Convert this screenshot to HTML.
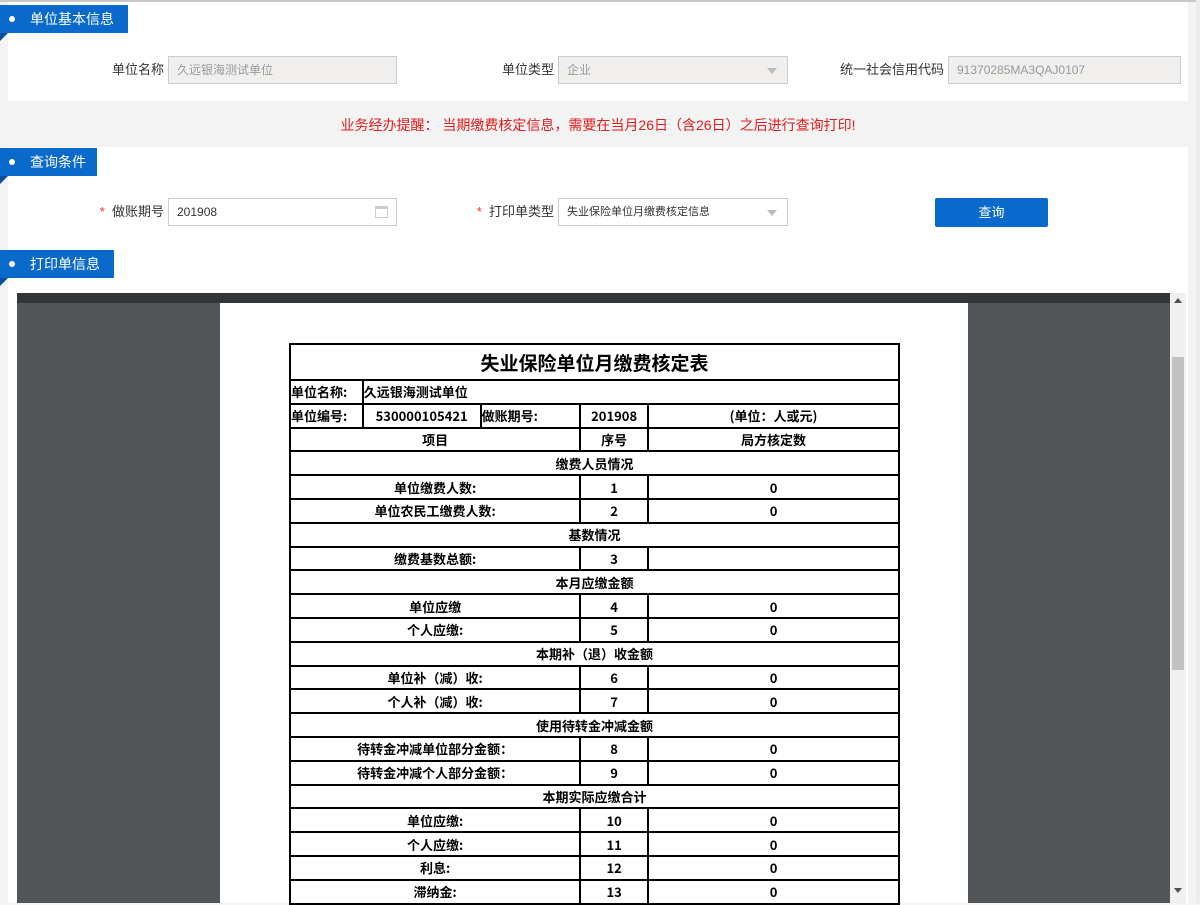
<!DOCTYPE html>
<html><head><meta charset="utf-8"><style>
*{margin:0;padding:0;box-sizing:border-box}
body{width:1200px;height:903px;overflow:hidden;background:#f3f3f3;font-family:"Liberation Sans","Microsoft YaHei","Noto Sans CJK SC",sans-serif;font-size:13px;color:#333;position:relative}
.abs{position:absolute}
.panel{position:absolute;background:#fff}
.tab{position:absolute;left:0;height:28px;background:#0a6acb;color:#fff;font-size:14px;line-height:28px;padding-left:30px}
.tab:before{content:"";position:absolute;left:9px;top:11px;width:6px;height:6px;border-radius:50%;background:#fff}
.tab:after{content:"";position:absolute;left:0;top:28px;border-top:8px solid #0a4f99;border-right:8px solid transparent}
.lbl{position:absolute;font-size:13px;color:#333;text-align:right;line-height:28px}
.inp{position:absolute;height:28px;border:1px solid #ccc;background:#f0efee;color:#999;font-size:12px;line-height:26px;padding-left:8px}
.inp.w{background:#fff;color:#333}
.arr{position:absolute;right:10px;top:11px;border-top:6px solid #bbb;border-left:5px solid transparent;border-right:5px solid transparent}
.req{color:#e33}
table{position:absolute;left:289px;top:343px;width:611px;border-collapse:collapse;font-family:"Noto Sans CJK SC",sans-serif;font-weight:bold;font-size:13px;color:#000}
td{border:2px solid #000;height:23.8px;text-align:center;padding:0;line-height:19px}
</style></head><body>
<div class="abs" style="left:0;top:0;width:1200px;height:2px;background:#c8c8c8"></div>
<div class="panel" style="left:8px;top:2px;width:1180px;height:99px"></div>
<div class="panel" style="left:8px;top:147px;width:1180px;height:756px"></div>
<div class="abs" style="left:1196px;top:0;width:4px;height:903px;background:#ececec"></div>

<div class="tab" style="top:5px;width:128px">单位基本信息</div>
<div class="lbl" style="left:100px;top:56px;width:64px">单位名称</div>
<div class="inp" style="left:168px;top:56px;width:229px">久远银海测试单位</div>
<div class="lbl" style="left:480px;top:56px;width:74px">单位类型</div>
<div class="inp" style="left:558px;top:56px;width:230px">企业<span class="arr"></span></div>
<div class="lbl" style="left:800px;top:56px;width:144px">统一社会信用代码</div>
<div class="inp" style="left:948px;top:56px;width:233px">91370285MA3QAJ0107</div>

<div class="abs" style="left:0;top:115px;width:1196px;text-align:center;color:#e31b1b;font-size:14px;line-height:20px">业务经办提醒： 当期缴费核定信息，需要在当月26日（含26日）之后进行查询打印!</div>

<div class="tab" style="top:148px;width:97px">查询条件</div>
<div class="lbl" style="left:90px;top:198px;width:74px"><span class="req">*</span>&nbsp; 做账期号</div>
<div class="inp w" style="left:168px;top:198px;width:229px">201908<span style="position:absolute;right:8px;top:7px;width:13px;height:12px;border:1px solid #ccc;border-top:3px solid #ccc"></span></div>
<div class="lbl" style="left:460px;top:198px;width:94px"><span class="req">*</span>&nbsp; 打印单类型</div>
<div class="inp w" style="left:558px;top:198px;width:230px;font-size:11px">失业保险单位月缴费核定信息<span class="arr"></span></div>
<div class="abs" style="left:935px;top:198px;width:113px;height:29px;background:#0a6acb;color:#fff;text-align:center;line-height:29px;border-radius:2px">查询</div>

<div class="tab" style="top:250px;width:114px">打印单信息</div>

<div class="abs" style="left:17px;top:293px;width:1153px;height:610px;background:#525659"></div>
<div class="abs" style="left:17px;top:293px;width:1153px;height:10px;background:#323639"></div>
<div class="abs" style="left:1170px;top:293px;width:16px;height:610px;background:#f0f0f0"></div>
<div class="abs" style="left:1172px;top:357px;width:12px;height:313px;background:#c1c1c1"></div>
<div class="abs" style="left:1174px;top:298px;border-bottom:5px solid #505050;border-left:4px solid transparent;border-right:4px solid transparent"></div>
<div class="abs" style="left:1174px;top:888px;border-top:5px solid #505050;border-left:4px solid transparent;border-right:4px solid transparent"></div>
<div class="abs" style="left:220px;top:303px;width:748px;height:600px;background:#fff"></div>

<table>
<colgroup><col style="width:73px"><col style="width:118px"><col style="width:100px"><col style="width:68px"><col style="width:252px"></colgroup>
<tr><td colspan="5" style="height:36px;font-size:19px">失业保险单位月缴费核定表</td></tr>
<tr><td style="text-align:left">单位名称:</td><td colspan="4" style="text-align:left">久远银海测试单位</td></tr>
<tr><td style="text-align:left">单位编号:</td><td>530000105421</td><td style="text-align:left">做账期号:</td><td>201908</td><td>(单位：人或元)</td></tr>
<tr><td colspan="3">项目</td><td>序号</td><td>局方核定数</td></tr>
<tr><td colspan="5">缴费人员情况</td></tr>
<tr><td colspan="3">单位缴费人数:</td><td>1</td><td>0</td></tr>
<tr><td colspan="3">单位农民工缴费人数:</td><td>2</td><td>0</td></tr>
<tr><td colspan="5">基数情况</td></tr>
<tr><td colspan="3">缴费基数总额:</td><td>3</td><td></td></tr>
<tr><td colspan="5">本月应缴金额</td></tr>
<tr><td colspan="3">单位应缴</td><td>4</td><td>0</td></tr>
<tr><td colspan="3">个人应缴:</td><td>5</td><td>0</td></tr>
<tr><td colspan="5">本期补（退）收金额</td></tr>
<tr><td colspan="3">单位补（减）收:</td><td>6</td><td>0</td></tr>
<tr><td colspan="3">个人补（减）收:</td><td>7</td><td>0</td></tr>
<tr><td colspan="5">使用待转金冲减金额</td></tr>
<tr><td colspan="3">待转金冲减单位部分金额：</td><td>8</td><td>0</td></tr>
<tr><td colspan="3">待转金冲减个人部分金额：</td><td>9</td><td>0</td></tr>
<tr><td colspan="5">本期实际应缴合计</td></tr>
<tr><td colspan="3">单位应缴:</td><td>10</td><td>0</td></tr>
<tr><td colspan="3">个人应缴:</td><td>11</td><td>0</td></tr>
<tr><td colspan="3">利息:</td><td>12</td><td>0</td></tr>
<tr><td colspan="3">滞纳金:</td><td>13</td><td>0</td></tr>
</table>
</body></html>
